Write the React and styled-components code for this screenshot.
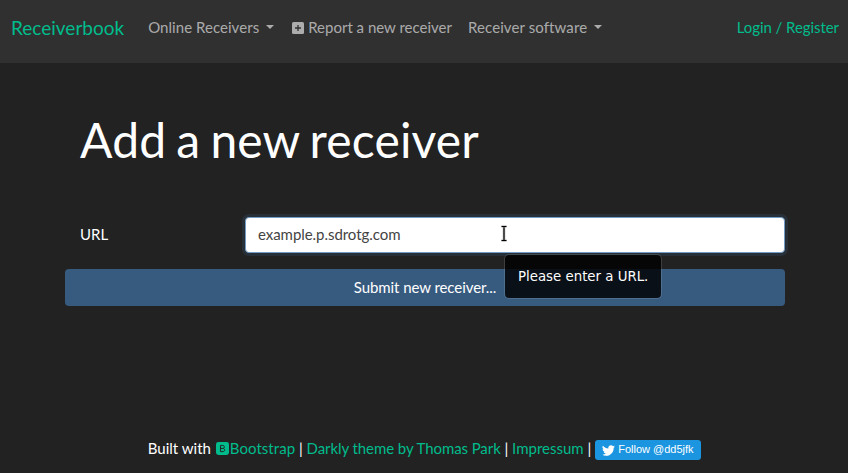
import React from "react";
import styled, { createGlobalStyle } from "styled-components";

const Global = createGlobalStyle`
  *, *::before, *::after { box-sizing: border-box; }
  html, body { margin: 0; background: #222; overflow: hidden; }
  body { font: 400 15px/1.5 Lato, sans-serif; color: #fff; }
`;
const Page = styled.div`
  height: 473px;
  display: flex;
  flex-direction: column;
`;
const Navbar = styled.nav`
  height: 63px;
  flex: none;
  display: flex;
  align-items: center;
  padding: 0 9px 8px 11px;
  background: #303030;
  white-space: nowrap;
`;
const Brand = styled.a`
  color: #00bc8c;
  font-size: 19px;
  line-height: 29px;
  margin-right: 24px;
`;
const NavItem = styled.a`
  display: inline-flex;
  align-items: center;
  color: rgba(255, 255, 255, 0.6);
  letter-spacing: ${(p) => p.$tracking || 0}px;
  margin-right: ${(p) => p.$gap || 16}px;
`;
const Caret = styled.span`
  margin: 0 0 1px 7px;
  border: 4.5px solid transparent;
  border-top-color: currentColor;
  border-bottom: 0;
`;
const PlusIcon = styled.svg`
  width: 12px;
  height: 12px;
  margin-right: 4px;
`;
const Login = styled.a`
  margin-left: auto;
  color: #00bc8c;
  letter-spacing: -0.06px;
`;
const Main = styled.main`
  flex: 1;
  padding: 48px 63px 0 65px;
`;
const Title = styled.h1`
  margin: 0 0 48px;
  padding-left: 15px;
  font-size: 48px;
  font-weight: 400;
  line-height: 58px;
  letter-spacing: 0.17px;
  word-spacing: -2.4px;
`;
const Field = styled.div`
  display: grid;
  grid-template-columns: 165px 540px;
  padding-left: 15px;
  align-items: center;
  margin-bottom: 16px;
`;
const Label = styled.label`
  padding-bottom: 2px;
`;
const Input = styled.input`
  height: 36px;
  width: 100%;
  padding: 0 12px 2px;
  border: 1px solid #739ac2;
  border-radius: 4px;
  outline: 0;
  box-shadow: 0 0 0 3px rgba(55, 90, 127, 0.25);
  color: #444;
  background: #fff;
  font: inherit;
  letter-spacing: -0.05px;
`;
const Submit = styled.button`
  display: block;
  width: 720px;
  height: 37px;
  padding: 0;
  border: 0;
  border-radius: 4px;
  background: #375a7f;
  color: #fff;
  font: inherit;
  letter-spacing: -0.07px;
`;
const Tooltip = styled.div`
  position: absolute;
  left: 504px;
  top: 254px;
  width: 158px;
  height: 45px;
  padding: 12px 0 0 13px;
  border: 1px solid rgba(255, 255, 255, 0.13);
  border-radius: 5px;
  background: rgba(0, 0, 0, 0.82);
  background-clip: padding-box;
  font: 13.33px/20px "DejaVu Sans", sans-serif;
  white-space: nowrap;
`;
const Cursor = styled.svg`
  position: absolute;
  left: 498px;
  top: 224px;
  width: 12px;
  height: 19px;
`;
const Footer = styled.footer`
  flex: none;
  height: 36px;
  display: flex;
  justify-content: center;
  align-items: flex-start;
  padding-left: 1px;
  white-space: pre;
`;
const FooterLink = styled.a`
  color: #00bc8c;
  letter-spacing: ${(p) => p.$tracking || 0}px;
`;
const BootstrapIcon = styled.svg`
  width: 13px;
  height: 13px;
  margin: 5px 1px 0 1px;
`;
const Follow = styled.a`
  display: flex;
  align-items: center;
  width: 106px;
  height: 20px;
  margin-top: 3px;
  padding-left: 7px;
  border-radius: 3px;
  background: #1b95e0;
  font: 11px/18px "Liberation Sans", sans-serif;
`;
const FollowLabel = styled.span`
  padding-bottom: 2px;
`;
const Bird = styled.svg`
  width: 13px;
  height: 13px;
  margin-right: 3px;
`;

export default function App() {
  return (
    <Page>
      <Global />
      <Navbar>
        <Brand>Receiverbook</Brand>
        <NavItem $gap={18} $tracking={0.05}>Online Receivers<Caret /></NavItem>
        <NavItem>
          <PlusIcon viewBox="0 0 12 12"><rect width="12" height="12" rx="1.5" fill="currentColor" /><path d="M6 3v6M3 6h6" stroke="#303030" strokeWidth="1.3" /></PlusIcon>
          Report a new receiver
        </NavItem>
        <NavItem $tracking={0.1}>Receiver software<Caret /></NavItem>
        <Login>Login / Register</Login>
      </Navbar>
      <Main>
        <Title>Add a new receiver</Title>
        <Field>
          <Label htmlFor="url">URL</Label>
          <Input id="url" defaultValue="example.p.sdrotg.com" />
        </Field>
        <Submit>Submit new receiver...</Submit>
      </Main>
      <Footer>
        <span>Built with </span>
        <BootstrapIcon viewBox="0 0 16 16"><rect width="16" height="16" rx="3" fill="#00bc8c" /><path d="M5.500 4.200v7.600h3c2.800 0 2.800-3.600.5-3.900 2-.5 1.700-3.700-.7-3.700zM5.500 7.900h3.500" fill="none" stroke="#222" strokeWidth="1.200" /></BootstrapIcon>
        <FooterLink $tracking={0.05}>Bootstrap</FooterLink><span> | </span>
        <FooterLink $tracking={-0.08}>Darkly theme by Thomas Park</FooterLink><span> | </span>
        <FooterLink>Impressum</FooterLink><span> | </span>
        <Follow>
          <Bird viewBox="0 0 24 24"><path fill="#fff" d="M23.950 4.570a10 10 0 0 1-2.820.770 4.960 4.960 0 0 0 2.160-2.720c-.950.550-2 .950-3.130 1.180a4.920 4.920 0 0 0-8.380 4.480C7.690 8.090 4.070 6.130 1.640 3.160a4.920 4.920 0 0 0 1.520 6.570 4.900 4.900 0 0 1-2.230-.610v.060a4.920 4.920 0 0 0 3.950 4.830 5 5 0 0 1-2.210.080 4.940 4.940 0 0 0 4.600 3.420A9.870 9.870 0 0 1 0 19.540a13.990 13.990 0 0 0 7.550 2.210c9.050 0 14-7.500 14-13.980 0-.210 0-.420-.010-.630a9.940 9.940 0 0 0 2.410-2.570z" /></Bird>
          <FollowLabel>Follow @dd5jfk</FollowLabel>
        </Follow>
      </Footer>
      <Cursor viewBox="-0.5 0 12 19">
        <path d="M3 2.500h2l.5.500.5-.500h2M5.500 3v13M3 16.500h2l.5-.500.5.500h2" fill="none" stroke="#bbb" strokeWidth="2.600" />
        <path d="M3 2.500h2l.5.500.5-.500h2M5.500 3v13M3 16.500h2l.5-.500.5.500h2" fill="none" stroke="#000" strokeWidth="1.200" />
      </Cursor>
      <Tooltip>Please enter a URL.</Tooltip>
    </Page>
  );
}
